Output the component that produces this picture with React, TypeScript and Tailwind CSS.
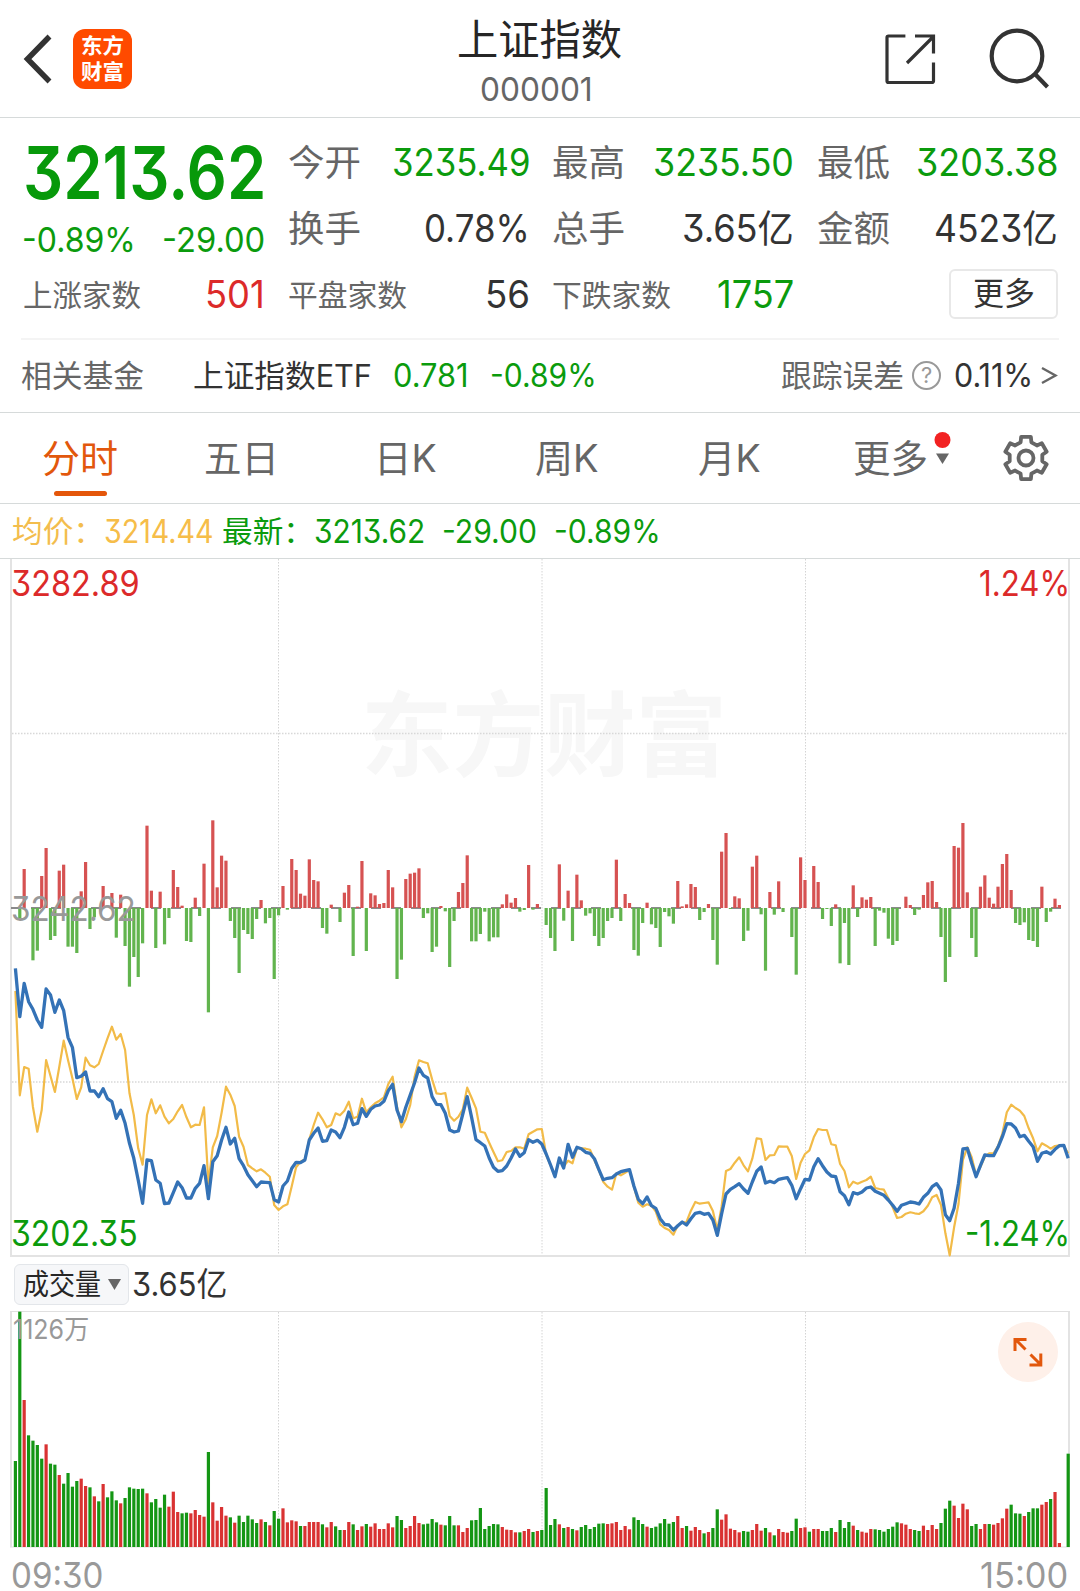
import { useLayoutEffect, useRef, useState, type ReactNode } from "react";

/** Text squeezed or stretched horizontally so that it takes exactly `w` pixels. */
function Fit({ w, className = "", children }: { w: number; className?: string; children: ReactNode }) {
  const ref = useRef<HTMLSpanElement>(null);
  const [scale, setScale] = useState(1);
  useLayoutEffect(() => {
    if (ref.current) setScale(w / ref.current.offsetWidth);
  }, [w]);
  return (
    <span className={`block shrink-0 ${className}`} style={{ width: w }}>
      <span ref={ref} className="block w-max origin-left whitespace-nowrap" style={{ transform: `scaleX(${scale})` }}>
        {children}
      </span>
    </span>
  );
}

const STEP = 4.3866;
const xAt = (i: number) => 15.4 + STEP * i;

// Thirds of a pixel above (+) or below (-) the zero line.
const FLOW = [
  0, -32, 117, 0, -157, -128, 96, 180, -96, -84, 112, 130, -116, -116, -135, 50, 138, -63, -28, 0, 66, 0, 45, -89, 40,
  -114, -236, -147, -207, -106, 247, 52, -120, 49, -109, -30, 114, 63, 7, -99, -102, 31, -24, 133, -313, 263, 62, 157,
  142, -39, -90, -195, -66, -78, -93, -33, 24, -46, -30, -213, -22, 66, -5, 147, 114, 43, 37, 146, 84, 80, -60, -77, 10,
  0, -42, 46, 69, -144, 4, 141, -129, 44, 38, 12, 15, 114, 62, -213, -155, 87, 103, 106, 119, -30, -16, -132, -116, 6,
  -10, -177, -39, 48, 75, 158, -100, -100, -78, -11, -100, -88, -88, 11, 41, 16, 30, -11, -6, 129, -5, 12, 0, -51, -90,
  -129, 131, -38, 52, -99, 100, 23, -23, -16, -84, -114, -90, -39, -30, 145, -39, 42, 15, -126, -143, -45, 16, -49, -60,
  -117, -12, -25, -47, 81, 5, 11, 72, 63, -36, -12, 12, -96, -170, 169, 225, -3, 35, 29, -99, -68, 124, 157, -19, -188,
  48, -20, 80, -12, 0, -87, -200, 152, 84, 0, 126, 78, -33, -3, -54, 11, -166, -45, -171, 68, -27, 32, 25, 33, -114, -8,
  -14, -92, -111, -99, 0, 34, 9, -21, -5, 39, 77, 81, 18, -87, -222, -147, 186, 181, 255, 47, -90, -147, 64, 98, 31, 13,
  64, 132, 162, 54, -45, -51, -43, -96, -99, -117, 64, -42, -11, 28, 9,
];

const PRICE = [
  505, 650, 550, 605, 628, 660, 682, 567, 585, 637, 600, 632, 712, 742, 833, 829, 816, 873, 873, 890, 866, 896, 905, 955,
  931, 970, 1030, 1075, 1140, 1210, 1080, 1082, 1140, 1150, 1211, 1209, 1178, 1146, 1163, 1194, 1194, 1165, 1150, 1097,
  1196, 1085, 1067, 1020, 982, 1032, 1015, 1076, 1097, 1124, 1142, 1160, 1146, 1147, 1148, 1199, 1206, 1158, 1143, 1105,
  1087, 1088, 1080, 1020, 1000, 984, 1024, 1022, 990, 996, 1013, 982, 936, 974, 970, 926, 949, 928, 918, 915, 904, 872,
  853, 930, 965, 922, 885, 848, 804, 826, 834, 890, 913, 914, 940, 990, 996, 993, 942, 890, 952, 1019, 1028, 1038, 1074,
  1102, 1114, 1112, 1098, 1074, 1047, 1069, 1058, 1019, 1027, 1021, 1032, 1062, 1095, 1130, 1074, 1104, 1033, 1072, 1042,
  1046, 1057, 1060, 1076, 1108, 1139, 1135, 1133, 1122, 1115, 1112, 1109, 1158, 1198, 1211, 1191, 1217, 1225, 1256, 1273,
  1275, 1290, 1277, 1266, 1275, 1256, 1240, 1237, 1243, 1240, 1260, 1306, 1242, 1182, 1168, 1160, 1151, 1167, 1180, 1146,
  1114, 1101, 1149, 1144, 1148, 1138, 1135, 1133, 1156, 1196, 1166, 1138, 1140, 1100, 1076, 1097, 1116, 1128, 1130, 1175,
  1187, 1214, 1178, 1182, 1176, 1164, 1161, 1174, 1180, 1186, 1200, 1216, 1234, 1216, 1211, 1206, 1208, 1212, 1192, 1180,
  1160, 1151, 1170, 1244, 1262, 1225, 1150, 1047, 1045, 1090, 1130, 1096, 1065, 1067, 1067, 1042, 1010, 971, 972, 984,
  1010, 1006, 1024, 1040, 1084, 1060, 1055, 1062, 1048, 1037, 1036, 1075,
];

const AVERAGE = [
  573, 886, 801, 806, 920, 995, 930, 780, 828, 876, 800, 722, 780, 835, 897, 862, 773, 796, 802, 792, 753, 715, 680, 719,
  702, 750, 880, 945, 1045, 1094, 945, 898, 940, 916, 950, 970, 957, 934, 915, 952, 982, 974, 975, 922, 1150, 1042, 1008,
  938, 860, 884, 918, 1010, 1040, 1095, 1105, 1114, 1108, 1118, 1130, 1215, 1230, 1219, 1213, 1158, 1102, 1085, 1078,
  1018, 975, 938, 958, 982, 975, 940, 946, 932, 905, 955, 950, 896, 937, 922, 910, 902, 892, 852, 830, 920, 982, 958, 915,
  830, 781, 786, 790, 838, 880, 882, 879, 948, 962, 950, 928, 863, 893, 925, 995, 998, 1028, 1056, 1084, 1081, 1056, 1053,
  1042, 1042, 1046, 1003, 995, 988, 987, 1065, 1096, 1130, 1076, 1100, 1082, 1090, 1044, 1045, 1046, 1049, 1080, 1110,
  1145, 1160, 1169, 1120, 1126, 1118, 1110, 1160, 1208, 1220, 1213, 1217, 1235, 1273, 1284, 1290, 1304, 1276, 1268, 1266,
  1232, 1206, 1211, 1209, 1207, 1233, 1290, 1220, 1113, 1107, 1088, 1072, 1096, 1114, 1076, 1015, 1017, 1080, 1066, 1065,
  1039, 1040, 1040, 1068, 1137, 1088, 1062, 1051, 1012, 987, 990, 990, 1033, 1036, 1092, 1113, 1162, 1145, 1151, 1145,
  1140, 1130, 1164, 1167, 1169, 1195, 1222, 1254, 1251, 1241, 1237, 1240, 1242, 1234, 1217, 1192, 1185, 1215, 1300, 1366,
  1282, 1212, 1080, 1042, 1072, 1126, 1100, 1070, 1060, 1060, 1038, 1000, 937, 914, 924, 932, 948, 985, 1015, 1054, 1030,
  1037, 1046, 1038, 1036, 1038, 1060,
];

// Bar heights in thirds of a pixel; negative values are falling minutes.
const VOLUME = [
  -258, -706, 441, -335, -319, -306, -265, 308, -250, -247, 216, -190, -222, -181, -198, 205, 183, -179, 152, -137, 189,
  -149, -167, -140, 131, -147, -179, -175, -174, -175, 161, -134, -144, -118, -157, 121, 166, 105, -101, -103, 101, 111,
  96, 91, -285, 134, 79, 120, 94, -89, 73, -94, -75, -94, -83, -72, 83, -75, 65, -108, -85, 116, 74, 80, 77, -63, 63, 75,
  75, 75, -68, 59, 75, -62, -51, 51, 75, -68, 51, 62, -69, 61, 71, 54, 54, 71, 59, -93, -81, 57, 63, 93, 72, -68, -70,
  -84, -74, 67, -65, -93, -65, 65, 45, 57, -80, -81, -117, -54, -63, -69, -68, 60, 52, 51, 44, -44, 48, 54, -45, 48, -51,
  -177, -66, -84, 68, -57, 60, -54, 50, -60, -66, -54, -60, -70, -71, 69, 71, 75, 51, 63, 53, -89, -81, -69, 61, -57, -61,
  -71, -84, -70, -75, 93, 57, -63, 49, 60, 51, -41, 45, -57, -113, 82, 98, 55, 51, 44, -48, -46, 51, 69, 49, -57, 44, -35,
  54, 45, 43, -48, -85, 57, 59, -46, 54, 54, -48, -48, -57, 45, -81, -57, -75, 64, -51, 46, 43, 54, -53, -51, -46, -54,
  -61, -74, 71, 67, 54, -51, -48, 64, 51, 66, 54, -72, -115, -139, 124, 87, 130, 113, -63, -69, 54, 69, -69, 67, 72, 86,
  115, -127, -101, -100, 93, -105, -116, -116, 127, 135, -144, 165, 12, 0, -280,
];

const line = (values: number[]) => values.map((v, i) => `${xAt(i).toFixed(1)},${(241 + v / 3).toFixed(1)}`).join(" ");

const gearPoints = Array.from({ length: 6 }, (_, k) => {
  const mid = -90 + k * 60;
  return [
    [mid - 19, 16.6],
    [mid - 13, 21.6],
    [mid + 13, 21.6],
    [mid + 19, 16.6],
  ].map(([a, r]) => {
    const t = (a * Math.PI) / 180;
    return `${(24 + r * Math.cos(t)).toFixed(2)},${(24 + r * Math.sin(t)).toFixed(2)}`;
  });
})
  .flat()
  .join(" ");

const GRID_X = [278.5, 542, 805.5];

function Header() {
  return (
    <header className="flex h-[118px] shrink-0 border-b border-[#d6dada]">
      <svg className="mt-[29px] ml-[19px] h-[60px] w-[36px]" viewBox="0 0 36 60" fill="none" stroke="#333" strokeWidth="5.500">
        <path d="M30.500 7.500 L8.500 30 L30.500 52.500" />
      </svg>
      <div className="mt-[29px] ml-[18px] flex h-[60px] w-[59px] flex-col items-center justify-center rounded-[12px] bg-[#ff4a00] text-[21px] leading-[26px] font-bold text-white">
        <Fit w={43}>东方</Fit>
        <Fit w={43}>财富</Fit>
      </div>
      <div className="ml-[325px] flex w-[165px] flex-col items-center">
        <Fit w={165} className="mt-[10px] text-[41.5px] leading-[60px] text-[#262626]">上证指数</Fit>
        <Fit w={113} className="mr-[6px] text-[32.5px] leading-[40px] text-[#666]">000001</Fit>
      </div>
      <svg className="mt-[30px] ml-[260px] h-[58px] w-[56px]" viewBox="0 0 56 58" fill="none" stroke="#333" strokeWidth="3.200">
        <path d="M23.400 6H6.500a1.500 1.500 0 0 0-1.500 1.500V51a1.500 1.500 0 0 0 1.500 1.500H50a1.500 1.500 0 0 0 1.500-1.500V32.500M33 6h18.500v17.500M25 33L51 7" />
      </svg>
      <svg className="mt-[26px] ml-[48px] h-[66px] w-[64px]" viewBox="0 0 64 66" fill="none" stroke="#333" strokeWidth="4.200">
        <circle cx="31" cy="30" r="25.300" />
        <path d="M49 48L61.500 61" />
      </svg>
    </header>
  );
}

function Cell({ label, lw, value, vw, color, small }: { label: string; lw: number; value: string; vw: number; color: string; small?: boolean }) {
  return (
    <div className="flex h-[66px] items-center justify-between leading-[66px]">
      <Fit w={lw} className={small ? "text-[29.5px] text-[#666]" : "text-[36.5px] text-[#666]"}>{label}</Fit>
      <Fit w={vw} className={`text-[37.5px] ${color}`}>{value}</Fit>
    </div>
  );
}

function Quote() {
  return (
    <section className="h-[295px] shrink-0 border-b border-[#d6dada]">
      <div className="flex pt-[12px] pl-[23px]">
        <div className="w-[242px]">
          <Fit w={243} className="text-[73px] leading-[86px] font-semibold text-[#07990a]">3213.62</Fit>
          <div className="-ml-px flex h-[48px] justify-between text-[34px] leading-[48px] text-[#0b9b0d]">
            <Fit w={114}>-0.89%</Fit>
            <Fit w={103}>-29.00</Fit>
          </div>
          <div className="flex h-[62px] justify-between leading-[62px]">
            <Fit w={118} className="text-[29.5px] text-[#666]">上涨家数</Fit>
            <Fit w={60} className="text-[37.5px] text-[#dc2a2a]">501</Fit>
          </div>
        </div>
        <div className="ml-[23px] w-[242px]">
          <Cell label="今开" lw={73} value="3235.49" vw={138} color="text-[#0b9b0d]" />
          <Cell label="换手" lw={73} value="0.78%" vw={106} color="text-[#333]" />
          <Cell label="平盘家数" lw={119} value="56" vw={45} color="text-[#333]" small />
        </div>
        <div className="ml-[22px] w-[242px]">
          <Cell label="最高" lw={73} value="3235.50" vw={141} color="text-[#0b9b0d]" />
          <Cell label="总手" lw={73} value="3.65亿" vw={112} color="text-[#333]" />
          <Cell label="下跌家数" lw={119} value="1757" vw={77} color="text-[#0b9b0d]" small />
        </div>
        <div className="ml-[23px] w-[241px]">
          <Cell label="最低" lw={73} value="3203.38" vw={142} color="text-[#0b9b0d]" />
          <Cell label="金额" lw={73} value="4523亿" vw={124} color="text-[#333]" />
          <div className="flex h-[64px] items-center justify-end">
            <button className="flex h-[50px] w-[109px] items-center justify-center rounded-[6px] border-2 border-[#e8e8e8] text-[31.5px] leading-[46px] text-[#333]">
              <Fit w={62}>更多</Fit>
            </button>
          </div>
        </div>
      </div>
      <div className="mx-[21px] mt-[10px] h-[2px] bg-[#f4f4f4]" />
      <div className="flex h-[72px] items-center pl-[21px] text-[32px] leading-[72px]">
        <Fit w={123} className="text-[31px] text-[#666]">相关基金</Fit>
        <Fit w={179} className="ml-[49px] text-[31px] text-[#333]">上证指数ETF</Fit>
        <Fit w={76} className="ml-[21px] text-[#0b9b0d]">0.781</Fit>
        <Fit w={107} className="ml-[21px] text-[#0b9b0d]">-0.89%</Fit>
        <Fit w={123} className="ml-[184px] text-[31px] text-[#666]">跟踪误差</Fit>
        <div className="mb-[2px] ml-[8px] flex h-[29px] w-[29px] items-center justify-center rounded-full border-[2.5px] border-[#999] text-[22px] leading-[25px] text-[#999]">?</div>
        <Fit w={79} className="ml-[13px] text-[#333]">0.11%</Fit>
        <svg className="ml-[8px] h-[20px] w-[17px]" viewBox="0 0 17 20" fill="none" stroke="#666" strokeWidth="2.400">
          <path d="M1 2L14.500 9.500L1 17" />
        </svg>
      </div>
    </section>
  );
}

function Tabs() {
  return (
    <nav className="flex h-[91px] shrink-0 border-b border-[#d6dada] text-[37.5px] leading-[92px] text-[#666]">
      <div className="ml-[42px] flex w-[76px] flex-col items-center">
        <Fit w={76} className="h-[78px] text-[#e2570c]">分时</Fit>
        <div className="h-[5px] w-[53px] rounded-full bg-[#e4560a]" />
      </div>
      <Fit w={75} className="ml-[86px]">五日</Fit>
      <Fit w={63} className="ml-[95px]">日K</Fit>
      <Fit w={64} className="ml-[98px]">周K</Fit>
      <Fit w={63} className="ml-[99px]">月K</Fit>
      <Fit w={75} className="ml-[92px]">更多</Fit>
      <svg className="mt-[18px] ml-[6px] h-[34px] w-[18px]" viewBox="0 0 18 34">
        <circle cx="8.500" cy="9" r="8" fill="#f22222" />
        <path d="M2 22.500H15L8.500 33Z" fill="#666" />
      </svg>
      <svg className="mt-[21px] ml-[50px] h-[48px] w-[48px]" viewBox="0 0 48 48" fill="none" stroke="#666" strokeWidth="3.800" strokeLinejoin="round">
        <polygon points={gearPoints} />
        <circle cx="24" cy="24" r="7.500" />
      </svg>
    </nav>
  );
}

function Legend() {
  return (
    <div className="flex h-[55px] shrink-0 border-b border-[#d6dada] pl-[12px] text-[32px] leading-[55px]">
      <Fit w={92} className="text-[30px] text-[#f3bd4d]">均价：</Fit>
      <Fit w={110} className="text-[#f6bd49]">3214.44</Fit>
      <Fit w={92} className="ml-[8px] text-[30px] text-[#0b9b0d]">最新：</Fit>
      <Fit w={111} className="text-[#0b9b0d]">3213.62</Fit>
      <Fit w={95} className="ml-[17px] text-[#0b9b0d]">-29.00</Fit>
      <Fit w={107} className="ml-[17px] text-[#0b9b0d]">-0.89%</Fit>
    </div>
  );
}

function PriceChart() {
  return (
    <div className="relative h-[698px] shrink-0">
      <Fit w={366} className="absolute top-[121px] left-[361px] text-[92px] leading-[112px] font-bold text-[#f7f7f7]">东方财富</Fit>
      <svg className="absolute inset-0 h-[698px] w-[1080px]" viewBox="0 0 1080 698" fill="none">
        <path d="M11 0V697M1069 0V697M10 697H1070" stroke="#e3e3e3" strokeWidth="2" />
        {GRID_X.map((x) => (
          <path key={x} d={`M${x} 0V696`} stroke="#d4d4d4" strokeWidth="1" strokeDasharray="1.500 1.500" />
        ))}
        <path d="M12 174.500H1068M12 523H1068" stroke="#d8d8d8" strokeWidth="1.300" strokeDasharray="1.500 1.500" />
        <path d="M11 349H1066" stroke="#8a8a8a" strokeWidth="1.800" strokeDasharray="10 10" />
        {FLOW.map((v, i) => (
          <rect key={i} x={xAt(i) - 1.6} y={v > 0 ? 349 - v / 3 : 349} width="3.200" height={Math.abs(v) / 3} fill={v > 0 ? "#d65252" : "#62b44e"} />
        ))}
        <polyline points={line(AVERAGE)} stroke="#f2bb48" strokeWidth="2.200" strokeLinejoin="round" />
        <polyline points={line(PRICE)} stroke="#3472b6" strokeWidth="3.300" strokeLinejoin="round" />
      </svg>
      <Fit w={125} className="absolute top-[330px] left-[11px] text-[34px] leading-[40px] text-[#999]">3242.62</Fit>
      <Fit w={129} className="absolute top-[3px] left-[11px] text-[35px] leading-[42px] text-[#dc2a2a]">3282.89</Fit>
      <Fit w={91} className="absolute top-[3px] left-[979px] text-[35px] leading-[42px] text-[#dc2a2a]">1.24%</Fit>
      <Fit w={127} className="absolute top-[653px] left-[11px] text-[35px] leading-[42px] text-[#0b9b0d]">3202.35</Fit>
      <Fit w={105} className="absolute top-[653px] left-[965px] text-[35px] leading-[42px] text-[#0b9b0d]">-1.24%</Fit>
    </div>
  );
}

function VolumePanel() {
  return (
    <>
      <div className="flex h-[54px] shrink-0 items-center pl-[14px]">
        <button className="flex h-[41px] w-[115px] items-center rounded-[6px] border border-[#e3e6ea] bg-[#f6f7f9] pl-[8px] text-[29px] leading-[41px] text-[#262626]">
          <Fit w={78}>成交量</Fit>
          <svg className="ml-[7px] h-[11px] w-[13px]" viewBox="0 0 13 11">
            <path d="M0 0H13L6.500 11Z" fill="#666" />
          </svg>
        </button>
        <Fit w={95} className="mt-[2px] ml-[3px] text-[32.5px] leading-[54px] text-[#333]">3.65亿</Fit>
      </div>
      <div className="relative h-[237px] shrink-0">
        <svg className="h-[237px] w-[1080px]" viewBox="0 0 1080 237" fill="none">
          <path d="M11 0V236M1069 0V236" stroke="#e3e3e3" strokeWidth="2" />
          <path d="M10 0.500H1070M10 236H1070" stroke="#e0e0e0" strokeWidth="1" />
          {GRID_X.map((x) => (
            <path key={x} d={`M${x} 1V236`} stroke="#d4d4d4" strokeWidth="1" strokeDasharray="1.500 1.500" />
          ))}
          {VOLUME.map((v, i) => (
            <rect key={i} x={xAt(i) - 1.6} y={236 - Math.abs(v) / 3} width="3.200" height={Math.abs(v) / 3} fill={v > 0 ? "#d93232" : "#149614"} />
          ))}
        </svg>
        <Fit w={76} className="absolute top-[3px] left-[13px] text-[27px] leading-[32px] text-[#999]">1126万</Fit>
        <svg className="absolute top-[11px] left-[998px] h-[60px] w-[60px]" viewBox="0 0 60 60" fill="none" stroke="#e2570c" strokeWidth="3">
          <circle cx="30" cy="30" r="30" fill="#fef0e9" stroke="none" />
          <path d="M28.500 17.400H17V29M17.400 17.400L27.500 27.500M32.500 32.500L42.800 42.800M42.800 31.500V43H31.500" />
        </svg>
      </div>
      <div className="flex h-[43px] shrink-0 justify-between pt-[11px] pr-[12px] pl-[11px] text-[36px] leading-[32px] text-[#999]">
        <Fit w={92}>09:30</Fit>
        <Fit w={88}>15:00</Fit>
      </div>
    </>
  );
}

export default function App() {
  return (
    <div className="flex h-[1591px] w-[1080px] flex-col overflow-hidden bg-white font-['Inter','Noto_Sans_CJK_SC',sans-serif] [font-feature-settings:'cv09'_1]">
      <Header />
      <Quote />
      <Tabs />
      <Legend />
      <PriceChart />
      <VolumePanel />
    </div>
  );
}
